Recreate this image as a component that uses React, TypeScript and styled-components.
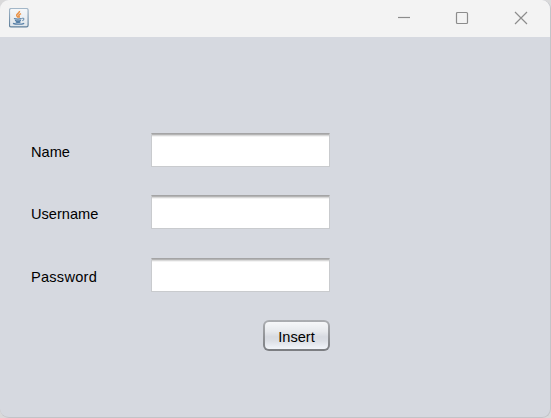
import React from 'react';
import styled, { createGlobalStyle } from 'styled-components';

const GlobalStyle = createGlobalStyle`
  * { box-sizing: border-box; }
  body { margin: 0; background: #d9d9da; overflow: hidden; }
`;

const Window = styled.div`
  width: 551px;
  height: 418px;
  display: flex;
  flex-direction: column;
  overflow: hidden;
  border: solid #c2c4c8;
  border-width: 0 1px 1px 0;
  border-radius: 9px;
  background: #d6d9e0;
  font-family: 'Liberation Sans', Arial, sans-serif;
`;

const TitleBar = styled.header`
  height: 37px;
  flex: none;
  display: flex;
  justify-content: space-between;
  background: #f3f3f3;
`;

const AppIcon = styled.svg`
  width: 20px;
  height: 20px;
  margin: 8px 0 0 9px;
`;

const Controls = styled.div`
  display: flex;
`;

const Control = styled.button`
  width: 58px;
  height: 36px;
  padding: 0;
  border: 0;
  background: none;
  display: flex;
  align-items: center;
  justify-content: center;

  &:last-child {
    margin-left: 1px;
  }

  svg {
    display: block;
    width: 14px;
    height: 14px;
    fill: none;
    stroke: #8c8c8c;
    stroke-width: 1.2;
  }
`;

const Form = styled.form`
  width: 330px;
  padding: 96px 0 0 31px;
  display: flex;
  flex-direction: column;
`;

const Row = styled.div<{ $gap: number }>`
  height: 35px;
  margin-bottom: ${(p) => p.$gap}px;
  display: grid;
  grid-template-columns: 120px 179px;
`;

const Label = styled.label<{ $tracking: number }>`
  padding-top: 11px;
  font-size: 14.6px;
  line-height: 17px;
  letter-spacing: ${(p) => p.$tracking}px;
  color: #000;
`;

const Field = styled.input`
  width: 179px;
  height: 34px;
  padding: 4px 7px;
  border: 1px solid #c9cbce;
  border-top-color: #a4a4a5;
  border-radius: 0;
  outline: 0;
  background: linear-gradient(#b4b4b4 0 1px, #d9d9d9 1px 2px, #f3f3f3 2px 3px, #fff 3px);
  font: 14.6px 'Liberation Sans', Arial, sans-serif;
`;

const InsertButton = styled.button`
  align-self: flex-end;
  width: 67px;
  height: 31px;
  padding: 2px 0 0;
  border: 2px solid transparent;
  border-radius: 6px;
  background:
    linear-gradient(#f6f7f9, #e7e9ed 35%, #d7dae1 55%, #dcdfe5 70%, #f2f5fa) padding-box,
    linear-gradient(#acaeb2, #7b7d81) border-box;
  font: 14.6px 'Liberation Sans', Arial, sans-serif;
  color: #000;
`;

const fields = [
  { id: 'name', label: 'Name', type: 'text', gap: 27, tracking: 0 },
  { id: 'username', label: 'Username', type: 'text', gap: 28, tracking: 0 },
  { id: 'password', label: 'Password', type: 'password', gap: 27, tracking: 0.24 },
];

function JavaIcon() {
  return (
    <AppIcon viewBox="0 0 20 20" fill="none">
      <defs>
        <linearGradient id="tile" x1="0" y1="0" x2="0" y2="1">
          <stop offset="0" stopColor="#f6f8fa" />
          <stop offset="1" stopColor="#dfe5ea" />
        </linearGradient>
        <linearGradient id="tileEdge" x1="0" y1="0" x2="0" y2="1">
          <stop offset="0" stopColor="#a3b7c8" />
          <stop offset="1" stopColor="#5f7f9b" />
        </linearGradient>
      </defs>
      <rect x="0.5" y="0.5" width="18.6" height="18.4" rx="1.6" fill="url(#tile)" stroke="url(#tileEdge)" strokeWidth="1.2" />
      <path d="M10.4 3C11 5 7.4 5.6 7.7 7.4c.2.9 1.1 1.4 1.3 2.2M12 5.6c-1.5.8-2.6 1.4-2 2.4.5.8.3 1.2-.3 1.8" stroke="#ea9247" strokeWidth="1.6" />
      <path d="M5 10.5c1.5.7 6 .7 7.7 0M6 12.4c1.5.6 4.5.6 5.9 0M6.8 13.8c1.2.5 3.4.5 4.6 0M4 15.4c2.4 1.1 8.6 1.1 11.2-.1" stroke="#567fa6" strokeWidth="1.3" />
      <path d="M13 10.3c2.4-.6 2.5 1.5.3 2.4" stroke="#6d91b2" strokeWidth="1.1" />
    </AppIcon>
  );
}

export default function App() {
  return (
    <>
      <GlobalStyle />
      <Window>
        <TitleBar>
          <JavaIcon />
          <Controls>
            <Control aria-label="Minimize">
              <svg viewBox="0 0 14 14"><path d="M1 6.5h12" /></svg>
            </Control>
            <Control aria-label="Maximize">
              <svg viewBox="0 0 14 14"><rect x="1.5" y="1.5" width="11" height="11" rx="1" /></svg>
            </Control>
            <Control aria-label="Close">
              <svg viewBox="0 0 14 14"><path d="M1 1l12 12M13 1L1 13" /></svg>
            </Control>
          </Controls>
        </TitleBar>
        <Form onSubmit={(e) => e.preventDefault()}>
          {fields.map((f) => (
            <Row key={f.id} $gap={f.gap}>
              <Label htmlFor={f.id} $tracking={f.tracking}>{f.label}</Label>
              <Field id={f.id} type={f.type} />
            </Row>
          ))}
          <InsertButton type="submit">Insert</InsertButton>
        </Form>
      </Window>
    </>
  );
}
